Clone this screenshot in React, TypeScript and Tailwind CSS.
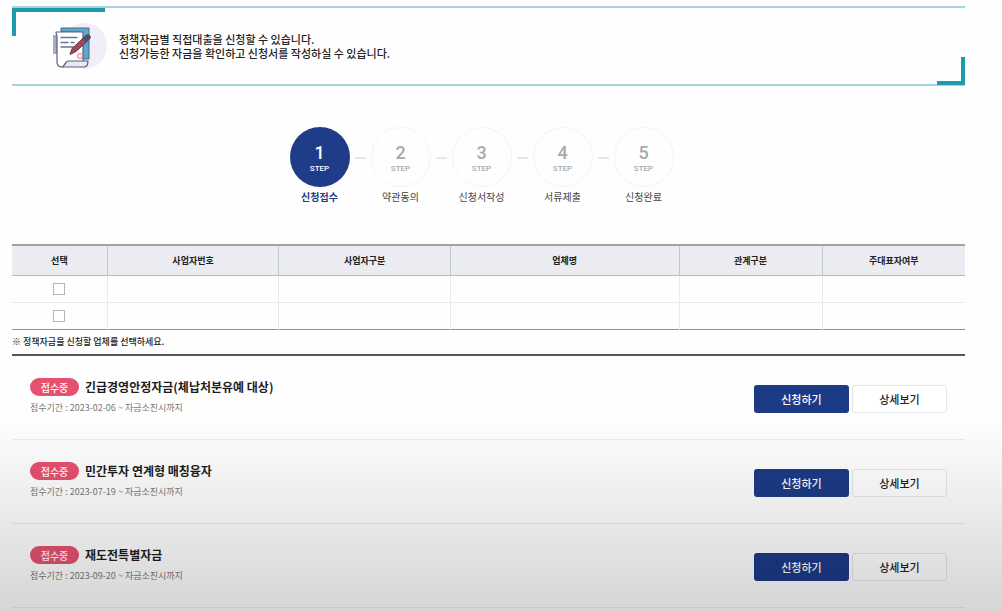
import { useState } from "react";

type Fund = {
  title: string;
  from: string;
};

const steps = ["신청접수", "약관동의", "신청서작성", "서류제출", "신청완료"];

const columns = [
  { label: "선택", width: "w-[10%]" },
  { label: "사업자번호", width: "w-[18%]" },
  { label: "사업자구분", width: "w-[18%]" },
  { label: "업체명", width: "w-[24%]" },
  { label: "관계구분", width: "w-[15%]" },
  { label: "주대표자여부", width: "w-[15%]" },
];

const funds: Fund[] = [
  { title: "긴급경영안정자금(체납처분유예 대상)", from: "2023-02-06" },
  { title: "민간투자 연계형 매칭융자", from: "2023-07-19" },
  { title: "재도전특별자금", from: "2023-09-20" },
];

const thCls = "border-l border-[#c3c5cc] first:border-l-0 text-[9px] font-bold text-[#222]";
const tdCls = "border-l border-[#e9e9ee] first:border-l-0";

function DocumentIcon() {
  return (
    <svg viewBox="0 0 68 52" className="h-[52px] w-[68px] shrink-0" fill="none" aria-hidden="true">
      <ellipse cx="45" cy="26" rx="22" ry="23" fill="#f0eff8" />
      <path d="M13 15h4v19h-4z" fill="#a9adba" />
      <path d="M21 8h28v31h-9V12H21z" fill="#5ba9cf" stroke="#566382" strokeWidth="1" strokeLinejoin="round" />
      <path
        d="M16 12h27v30H27c-3 0-2 5-5 5-3 0-5-2-5-5V17c0-2-1-3-1-5z"
        fill="#fff"
        stroke="#566382"
        strokeWidth="1.2"
        strokeLinejoin="round"
      />
      <path d="M28 41h20c0 4-1 6-4 6H22c3 0 3-6 6-6z" fill="#e8e8f0" stroke="#566382" strokeWidth="1.2" strokeLinejoin="round" />
      <path d="M21 17.500h16M21 22.500h7M31 22.500h3M21 27h12" stroke="#68739c" strokeWidth="1.3" strokeLinecap="round" />
      <circle cx="40" cy="36" r="2.300" stroke="#f0919c" strokeWidth="1.300" />
      <path d="M46 15.500c2-2 5.500.5 4 3L36 31.500l-6 3 2-6z" fill="#a94556" stroke="#553f55" strokeWidth="1" strokeLinejoin="round" />
      <path d="M42.500 19l4 3.500 3.500-4c1.500-2.500-2-5-4-3z" fill="#4b4f68" />
    </svg>
  );
}

function IntroBanner() {
  return (
    <section className="relative flex h-20 items-center border-y-2 border-[#a3d5da] pl-7">
      <span className="absolute top-0 left-0 h-7 w-[93px] border-l-4 border-t-4 border-[#1b9bab]" />
      <span className="absolute -bottom-px right-0 h-7 w-7 border-b-4 border-r-4 border-[#1b9bab]" />
      <DocumentIcon />
      <p className="ml-[11px] text-[11px] leading-[14px] font-medium text-[#222]">
        정책자금별 직접대출을 신청할 수 있습니다.
        <br />
        신청가능한 자금을 확인하고 신청서를 작성하실 수 있습니다.
      </p>
    </section>
  );
}

function StepList({ current }: { current: number }) {
  return (
    <ol className="mt-[41px] flex justify-center pr-3.5">
      {steps.map((label, i) => {
        const active = i + 1 === current;
        return (
          <li key={label} className="flex">
            {i > 0 && <span className="mx-[5px] mt-[30px] h-0.5 w-[11px] bg-[#e6e6e6]" />}
            <div className="flex w-[60px] flex-col items-center">
              <div
                className={
                  active
                    ? "flex h-[60px] w-[60px] flex-col items-center justify-center rounded-full bg-[#1f3c88] pt-1.5 text-white"
                    : "flex h-[60px] w-[60px] flex-col items-center justify-center rounded-full border border-[#f4f4f8] pt-1.5 text-[#a9a9a9]"
                }
              >
                <span className="font-[family-name:Roboto,sans-serif] text-[18px] leading-[18px] font-medium">{i + 1}</span>
                <span className="font-[family-name:Roboto,sans-serif] text-[8px] leading-[14px] font-medium">STEP</span>
              </div>
              <span
                className={
                  active
                    ? "mt-0.5 text-[10px] leading-4 font-bold whitespace-nowrap text-[#1f3c88]"
                    : "mt-0.5 text-[10px] leading-4 whitespace-nowrap text-[#444]"
                }
              >
                {label}
              </span>
            </div>
          </li>
        );
      })}
    </ol>
  );
}

function CompanyTable() {
  const [selected, setSelected] = useState<number[]>([]);

  const toggle = (row: number) =>
    setSelected(prev => (prev.includes(row) ? prev.filter(r => r !== row) : [...prev, row]));

  return (
    <table className="mt-[39px] w-full table-fixed border-collapse border-t-2 border-b border-t-[#a2a2a4] border-b-[#909092]">
      <thead>
        <tr className="h-[30px] border-b border-[#b9bbc2] bg-[#ebecf1]">
          {columns.map(col => (
            <th key={col.label} scope="col" className={`${thCls} ${col.width}`}>
              {col.label}
            </th>
          ))}
        </tr>
      </thead>
      <tbody>
        {[1, 2].map(row => (
          <tr key={row} className="h-[27px] border-b border-[#e9e9ee] last:border-b-[#909092]">
            <td className={tdCls}>
              <input
                type="checkbox"
                aria-label={`업체 ${row} 선택`}
                checked={selected.includes(row)}
                onChange={() => toggle(row)}
                className="mx-auto block h-3 w-3 appearance-none border border-[#b5b5b5] bg-white checked:bg-[#1f3c88]"
              />
            </td>
            {columns.slice(1).map(col => (
              <td key={col.label} className={tdCls} />
            ))}
          </tr>
        ))}
      </tbody>
    </table>
  );
}

function FundRow({ fund }: { fund: Fund }) {
  return (
    <li className="flex h-[84px] items-center justify-between border-b border-[#ececef] px-[18px]">
      <div>
        <div className="flex items-center gap-1.5">
          <span className="flex h-[18px] w-[49px] items-center justify-center rounded-full bg-[#e5516f] text-[10px] font-medium text-white">
            접수중
          </span>
          <h2 className="text-[12px] leading-[18px] font-bold text-[#1c1c1c]">{fund.title}</h2>
        </div>
        <p className="mt-1 text-[9px] leading-4 text-[#777]">접수기간 : {fund.from} ~ 자금소진시까지</p>
      </div>
      <div className="flex gap-[3px] pt-1">
        <button type="button" className="h-7 w-[95px] rounded-[3px] bg-[#1c3a86] text-[11px] font-medium text-white">
          신청하기
        </button>
        <button type="button" className="h-7 w-[95px] rounded-[3px] border border-[#e4e5ea] bg-white text-[11px] font-medium text-[#222]">
          상세보기
        </button>
      </div>
    </li>
  );
}

export default function App() {
  return (
    <div className="relative min-h-screen bg-[#fefefe] font-['Noto_Sans_CJK_KR',sans-serif]">
      <main className="pt-1.5 pr-[37px] pl-3">
        <IntroBanner />
        <StepList current={1} />
        <CompanyTable />
        <p className="h-6 text-[9px] leading-6 font-medium text-[#222]">※ 정책자금을 신청할 업체를 선택하세요.</p>
        <ul className="border-t-2 border-[#555]">
          {funds.map(fund => (
            <FundRow key={fund.title} fund={fund} />
          ))}
        </ul>
      </main>
      {/* fade over the rest of the list */}
      <div className="pointer-events-none absolute inset-x-0 bottom-0 h-48 bg-linear-to-b from-black/0 to-black/16" />
    </div>
  );
}
